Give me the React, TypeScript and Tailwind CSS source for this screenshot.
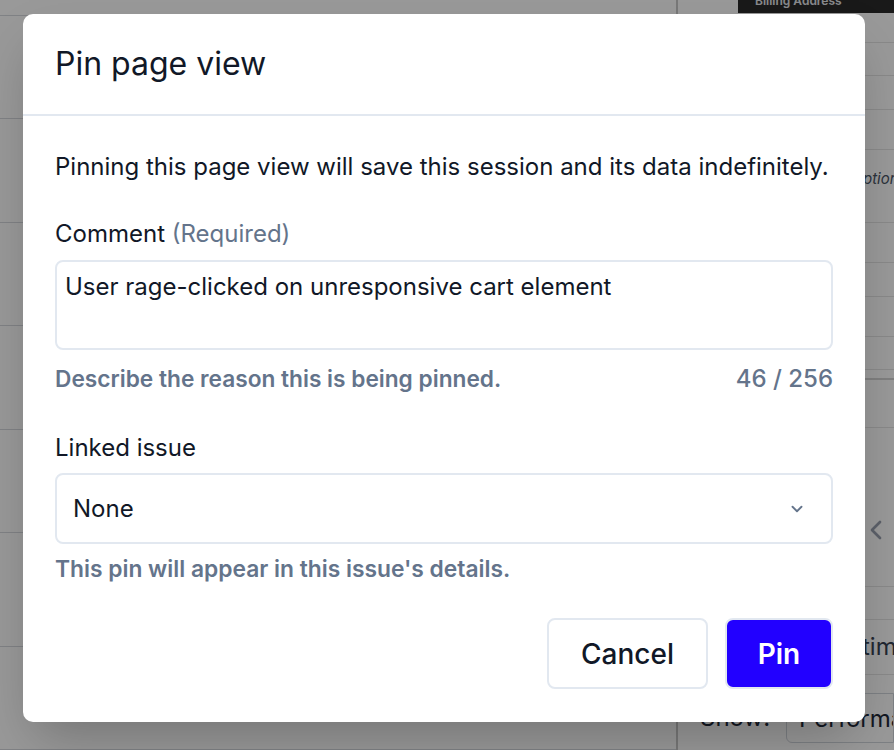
import { ChevronDown, ChevronLeft } from "lucide-react";

const leftRows = [103, 104, 103, 105, 103, 114, 103];
const rightRows = [30, 33, 34, 40, 73, 40, 34, 40, 33];

const App = () => {
  return (
    <div className="relative w-[894px] h-[750px] overflow-hidden bg-white font-['Inter',sans-serif]">
      {/* background page */}
      <div className="flex h-full">
        <main className="flex-1 flex flex-col">
          <div className="h-[16px] border-b border-[#d6d9de]" />
          {leftRows.map((h, i) => (
            <div key={i} style={{ height: h }} className="border-b border-[#d6d9de]" />
          ))}
        </main>
        <aside className="w-[218px] border-l-2 border-[#c8c8c8] flex flex-col">
          <div className="h-[13px] ml-[60px] bg-[#2a2a2a] text-[12px] leading-[13px] text-gray-200 font-semibold px-[17px] overflow-hidden">
            <span className="relative -top-[6px]">Billing Address</span>
          </div>
          {rightRows.map((h, i) => (
            <div key={i} style={{ height: h }} className="border-b border-[#e5e5e5]">
              {i === 4 && (
                <div className="pl-[185px] pt-[19px] text-[15px] leading-[20px] italic text-gray-600 whitespace-nowrap">ption</div>
              )}
            </div>
          ))}
          <div className="h-[10px] border-b-2 border-[#d4d4d4]" />
          <div className="h-[48px] border-b border-[#e5e5e5]" />
          <div className="h-[159px] border-b border-[#e5e5e5] flex justify-end pr-[2px] pt-[86px]">
            <ChevronLeft className="w-[32px] h-[32px] text-gray-400" strokeWidth={2} />
          </div>
          <div className="h-[33px] border-b border-[#e5e5e5]" />
          <div className="h-[55px] border-b border-[#e5e5e5] flex items-center pl-[184px] text-[24px] text-gray-700 whitespace-nowrap">
            tim
          </div>
          <div className="flex items-start gap-[16px] pl-[22px] pt-[18px]">
            <span className="text-[24px] leading-[50px] text-gray-800">Show:</span>
            <div className="h-[50px] flex-1 border border-gray-300 rounded-l-md pl-[12px] text-[24px] text-gray-800 leading-[50px] whitespace-nowrap overflow-hidden">
              Performance
            </div>
          </div>
        </aside>
      </div>

      {/* overlay */}
      <div className="absolute inset-0 bg-black/40" />

      {/* dialog */}
      <div className="absolute inset-0 pt-[14px] pl-[23px]">
        <div className="w-[842px] h-[708px] bg-white rounded-[10px] shadow-2xl flex flex-col text-[#111827]">
          <div className="h-[102px] px-[32px] flex items-center border-b-2 border-[#e2e8f0]">
            <h2 className="text-[32px] leading-[40px] font-normal">Pin page view</h2>
          </div>
          <div className="px-[32px] flex flex-col">
            <p className="pt-[35px] text-[24px] leading-[32px] whitespace-nowrap">
              Pinning this page view will save this session and its data indefinitely.
            </p>

            <label className="mt-[35px] text-[24px] leading-[32px]">
              Comment <span className="text-[#64748b]">(Required)</span>
            </label>
            <textarea
              className="mt-[10px] h-[90px] w-full resize-none rounded-[8px] border-2 border-[#e2e8f0] px-[8px] py-[9px] text-[24px] leading-[32px] text-[#111827] outline-none"
              defaultValue="User rage-clicked on unresponsive cart element"
            />
            <div className="mt-[13px] flex justify-between items-center text-[#64748b] leading-[32px]">
              <span className="text-[22.7px] font-semibold">Describe the reason this is being pinned.</span>
              <span className="text-[24px] font-medium">46 / 256</span>
            </div>

            <label className="mt-[37px] text-[24px] leading-[32px]">Linked issue</label>
            <div className="mt-[9px] h-[71px] rounded-[8px] border-2 border-[#e2e8f0] flex items-center justify-between pl-[16px] pr-[25px]">
              <span className="text-[24px] text-[#111827]">None</span>
              <ChevronDown className="w-[18px] h-[18px] text-[#64748b]" strokeWidth={2.5} />
            </div>
            <p className="mt-[9px] text-[22.8px] leading-[32px] font-semibold text-[#64748b]">
              This pin will appear in this issue's details.
            </p>

            <div className="mt-[33px] flex justify-end gap-[17px]">
              <button className="w-[161px] h-[71px] rounded-[8px] border-2 border-[#e2e8f0] bg-white text-[28px] font-medium text-[#111827]">
                Cancel
              </button>
              <button className="w-[108px] h-[71px] rounded-[8px] border-2 border-[#e2e8f0] bg-[#2200ff] text-[28px] font-semibold text-white">
                Pin
              </button>
            </div>
          </div>
        </div>
      </div>
    </div>
  );
};

export default App;
